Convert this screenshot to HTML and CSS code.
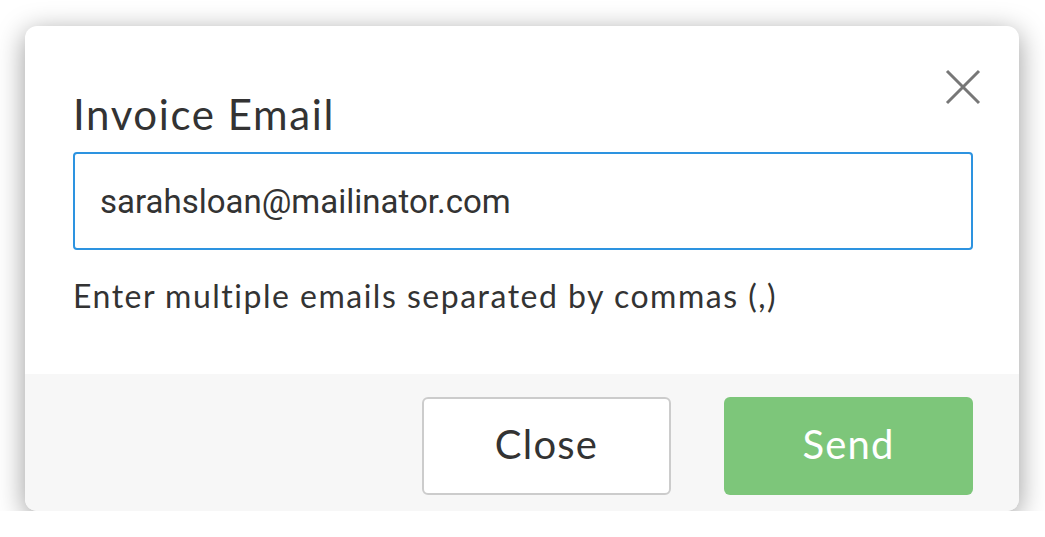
FILE: index.html
```html
<!DOCTYPE html>
<html lang="en">
<head>
    <meta charset="UTF-8">
    <meta name="viewport" content="width=device-width, initial-scale=1.0">
    <title>Invoice Email</title>

    <link rel="stylesheet" href="styles.css">
</head>

<body>
    <section class="modal">
        <div class="modalBody">
            <button class="closeIcon" type="button" aria-label="Close">
                <svg width="36" height="36" viewBox="0 0 36 36">
                    <path d="M2 2 L34 34 M34 2 L2 34" stroke="#777" stroke-width="3" fill="none"/>
                </svg>
            </button>
            <h2 class="modalTitle">Invoice Email</h2>
            <input type="text" class="emailInput" value="sarahsloan@mailinator.com">
            <p class="hint">Enter multiple emails separated by commas (,)</p>
        </div>

        <div class="modalFooter">
            <button type="button" class="btn btnClose">Close</button>
            <button type="button" class="btn btnSend">Send</button>
        </div>
    </section>
</body>
</html>
```

FILE: styles.css
```css
body{
    margin: 0;
    background-color: #fff;
    font-family: Lato, "Open Sans", sans-serif;
}
.modal{
    width: 994px;
    height: 485px;
    margin: 26px 0 0 25px;
    background-color: #fff;
    border-radius: 12px;
    box-shadow: 0 6px 28px rgba(0, 0, 0, 0.4);
    display: flex;
    flex-direction: column;
    overflow: hidden;
}
.modalBody{
    position: relative;
    height: 348px;
    box-sizing: border-box;
    padding: 0 46px 0 48px;
}
.closeIcon{
    position: absolute;
    top: 43px;
    right: 38px;
    width: 36px;
    height: 36px;
    padding: 0;
    border: none;
    background: none;
}
.modalTitle{
    margin: 0;
    padding-top: 62px;
    font-size: 42px;
    font-weight: 400;
    letter-spacing: 1.6px;
    line-height: 52px;
    color: #333;
}
.emailInput{
    display: block;
    width: 100%;
    height: 98px;
    margin-top: 12px;
    box-sizing: border-box;
    padding: 0 25px;
    border: 2px solid #2d93e0;
    border-radius: 4px;
    font-family: Roboto, "Liberation Sans", sans-serif;
    font-size: 33px;
    color: #333;
    outline: none;
}
.hint{
    margin: 26px 0 0;
    font-size: 32px;
    letter-spacing: 1.5px;
    line-height: 40px;
    color: #333;
}
.modalFooter{
    flex: 1;
    background-color: #f7f7f7;
    display: flex;
    justify-content: flex-end;
    align-items: flex-start;
    gap: 53px;
    padding: 23px 46px 0 0;
}
.btn{
    width: 249px;
    height: 98px;
    padding: 0 0 4px;
    border-radius: 6px;
    font-family: Lato, "Open Sans", sans-serif;
    font-size: 40px;
    letter-spacing: 1.2px;
    cursor: pointer;
}
.btnClose{
    background-color: #fff;
    border: 2px solid #ccc;
    color: #333;
}
.btnSend{
    background-color: #7dc67a;
    border: none;
    color: #fff;
}
```
